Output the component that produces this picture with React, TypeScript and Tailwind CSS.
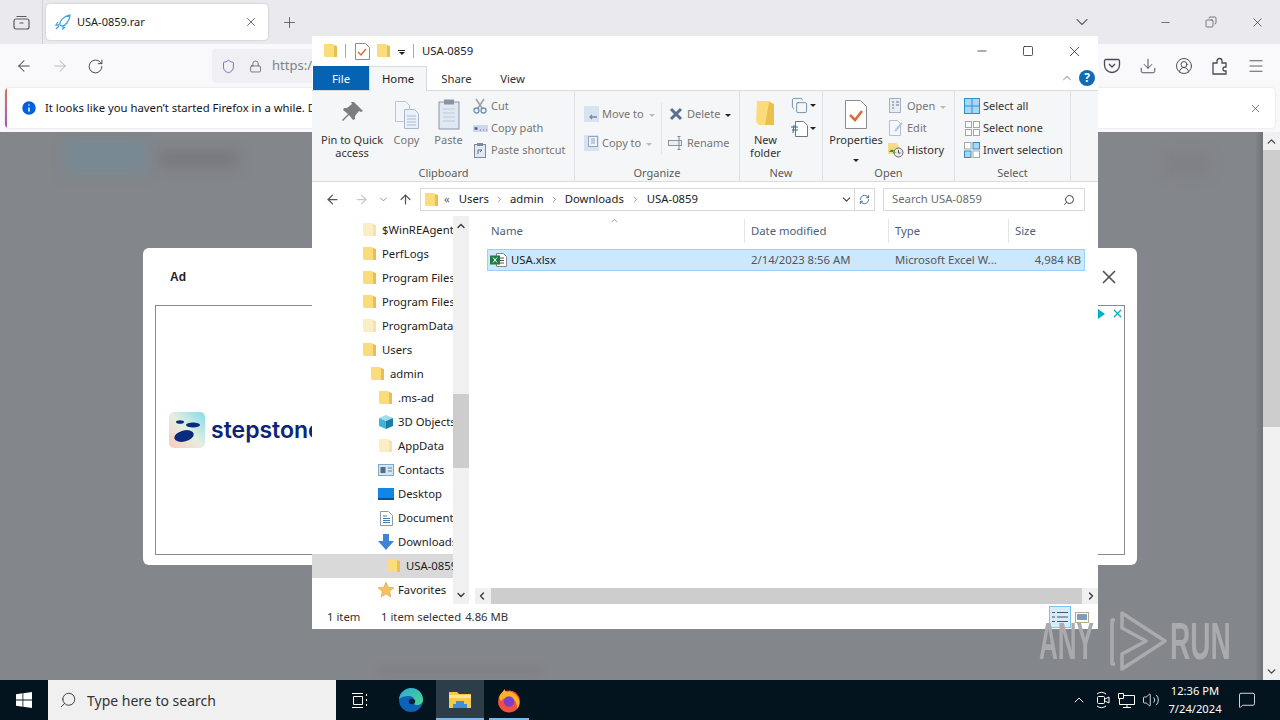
import { ArrowLeft, ArrowRight, ArrowUp, ChevronDown, ChevronLeft, ChevronRight, ChevronUp, Copy, Download, Menu, MessageSquare, Minus, Plus, RotateCw, Search, Square, Lock, Shield, X, CircleUserRound, Info, RefreshCw, Volume2 } from 'lucide-react'

function Folder({ pale = false, size = 14 }: { pale?: boolean; size?: number }) {
  return (
    <svg width={size} height={size + 2} viewBox="0 0 14 16" className="shrink-0">
      <path d="M0 1h9l1 1v12H1l-1-1z" fill={pale ? '#fbeec4' : '#fbdc7c'} />
      <path d="M10 2l3 1v11h-3z" fill={pale ? '#f5e3ac' : '#e9bf52'} />
    </svg>
  )
}

function Arrowhead() {
  return <span className="inline-block h-0 w-0 border-x-[3px] border-t-[3px] border-x-transparent border-t-[#222]" />
}

function PaleArrowhead() {
  return <span className="inline-block h-0 w-0 border-x-[3px] border-t-[3px] border-x-transparent border-t-[#bbb]" />
}

function RibbonSmall({ icon, label, muted = true, suffix }: { icon: React.ReactNode; label: string; muted?: boolean; suffix?: React.ReactNode }) {
  return (
    <div className={`flex h-[22px] items-center gap-[3px] whitespace-nowrap ${muted ? 'text-[#757575]' : 'text-[#333]'}`}>
      <span className="flex w-[16px] justify-center">{icon}</span>
      <span>{label}</span>
      {suffix}
    </div>
  )
}

function RibbonGroup({ label, width, children }: { label: string; width: string; children: React.ReactNode }) {
  return (
    <div className={`flex h-full shrink-0 flex-col border-r border-[#dfe1e4] ${width}`}>
      <div className="min-h-0 flex-1">{children}</div>
      <div className="h-[17px] text-center leading-[17px] text-[#5c5c5c]">{label}</div>
    </div>
  )
}

const treeRows: { label: string; indent: string; icon?: React.ReactNode; pale?: boolean; selected?: boolean }[] = [
  { label: '$WinREAgent', indent: 'pl-[50px]', pale: true },
  { label: 'PerfLogs', indent: 'pl-[50px]' },
  { label: 'Program Files', indent: 'pl-[50px]' },
  { label: 'Program Files', indent: 'pl-[50px]' },
  { label: 'ProgramData', indent: 'pl-[50px]', pale: true },
  { label: 'Users', indent: 'pl-[50px]' },
  { label: 'admin', indent: 'pl-[58px]' },
  { label: '.ms-ad', indent: 'pl-[66px]' },
  {
    label: '3D Objects',
    indent: 'pl-[66px]',
    icon: (
      <svg width="16" height="16" viewBox="0 0 16 16">
        <path d="M8 1l7 3-7 3-7-3z" fill="#9fdcec" />
        <path d="M1 4l7 3v8l-7-3z" fill="#3fb4d4" />
        <path d="M15 4l-7 3v8l7-3z" fill="#1a7fa6" />
      </svg>
    ),
  },
  { label: 'AppData', indent: 'pl-[66px]', pale: true },
  {
    label: 'Contacts',
    indent: 'pl-[66px]',
    icon: (
      <svg width="16" height="12" viewBox="0 0 16 12">
        <rect x="0.5" y="0.5" width="15" height="11" fill="#cfe6f5" stroke="#7fa9c6" />
        <rect x="2.5" y="3" width="5" height="6" fill="#5a6a78" />
        <path d="M10 4h4M10 7h4" stroke="#5b86a6" />
      </svg>
    ),
  },
  {
    label: 'Desktop',
    indent: 'pl-[66px]',
    icon: (
      <svg width="16" height="12" viewBox="0 0 16 12">
        <rect width="16" height="12" fill="#0f86e8" />
        <rect y="10" width="16" height="2" fill="#0a4f98" />
      </svg>
    ),
  },
  {
    label: 'Documents',
    indent: 'pl-[66px]',
    icon: (
      <svg width="13" height="15" viewBox="0 0 13 15">
        <path d="M.5.5h8l4 4v10H.5z" fill="#fff" stroke="#8a9aa8" />
        <path d="M3 5h4M3 7.500h7M3 9.500h7M3 11.500h7" stroke="#3f7fb0" />
      </svg>
    ),
  },
  {
    label: 'Downloads',
    indent: 'pl-[66px]',
    icon: (
      <svg width="16" height="16" viewBox="0 0 16 16">
        <path d="M5 0h6v7h5l-8 9-8-9h5z" fill="#3f84d4" />
      </svg>
    ),
  },
  { label: 'USA-0859', indent: 'pl-[74px]', selected: true, pale: false },
  {
    label: 'Favorites',
    indent: 'pl-[66px]',
    icon: (
      <svg width="16" height="16" viewBox="0 0 16 16">
        <path d="M8 0l2.300 5.200 5.700.6-4.300 3.700 1.300 5.500L8 12.100 3 15l1.300-5.500L0 5.800l5.700-.6z" fill="#f4c063" stroke="#d79a3a" strokeWidth="0.5" />
      </svg>
    ),
  },
]

function ExplorerWindow() {
  return (
    <div className="absolute left-[312px] top-[36px] flex h-[593px] w-[786px] flex-col bg-white text-[11.300px] text-[#1c1c1c] [font-family:'Noto_Sans',sans-serif]">
      {/* title bar */}
      <div className="flex h-[30px] shrink-0 items-center pl-[12px]">
        <Folder />
        <span className="ml-[7px] h-[14px] w-px bg-[#aaa]" />
        <svg width="15" height="17" viewBox="0 0 15 17" className="ml-[9px]">
          <path d="M.5.5h10l4 4v12H.5z" fill="#fff" stroke="#8d8d8d" />
          <path d="M3 9l3 3 5-6" fill="none" stroke="#dc6a3c" strokeWidth="1.500" />
        </svg>
        <span className="ml-[7px]"><Folder /></span>
        <span className="ml-[7px] mt-[3px] flex flex-col items-center gap-px">
          <span className="h-px w-[7px] bg-[#222]" />
          <Arrowhead />
        </span>
        <span className="ml-[8px] h-[14px] w-px bg-[#aaa]" />
        <span className="ml-[8px] mt-px">USA-0859</span>
        <div className="ml-auto flex items-center text-[#111]">
          <span className="flex w-[46px] justify-center"><Minus size={14} strokeWidth={1.2} /></span>
          <span className="flex w-[46px] justify-center"><Square size={12} strokeWidth={1.4} /></span>
          <span className="flex w-[46px] justify-center"><X size={17} strokeWidth={1} /></span>
          <span className="w-[1px]" />
        </div>
      </div>

      {/* ribbon tabs */}
      <div className="relative flex h-[25px] shrink-0 items-end border-b border-[#dadbdc]">
        <div className="ml-px flex h-[24px] w-[56px] items-center justify-center bg-[#0563b1] pt-[2px] text-white">File</div>
        <div className="relative top-px flex h-[25px] w-[58px] items-center justify-center border-x border-t border-[#dadbdc] bg-[#f5f6f7] pt-[1px] text-[#222]">Home</div>
        <div className="flex h-[24px] w-[59px] items-center justify-center pt-[2px] text-[#333]">Share</div>
        <div className="flex h-[24px] w-[53px] items-center justify-center pt-[2px] text-[#333]">View</div>
        <div className="ml-auto mb-[4px] mr-[3px] flex items-center gap-[5px]">
          <ChevronUp size={14} className="text-[#bbb]" />
          <span className="flex h-[16px] w-[16px] items-center justify-center rounded-full bg-[#0f6cbd] text-[12px] font-bold leading-none text-white">?</span>
        </div>
      </div>

      {/* ribbon */}
      <div className="flex h-[91px] shrink-0 border-b border-[#dadbdc] bg-[#f5f6f7] pl-px text-[11px]">
        <RibbonGroup label="Clipboard" width="w-[262px]">
          <div className="flex h-full">
            <div className="flex w-[78px] flex-col items-center pt-[9px] leading-[13px] text-[#333]">
              <svg width="26" height="26" viewBox="0 0 26 26" className="mb-[7px]">
                <path d="M15 2l9 9-2 1-2-1-4 5 0 3-2 1-4-5-6 6-1-1 6-6-5-4 1-2 3 0 5-4-1-2z" fill="#7b7f84" />
              </svg>
              <span>Pin to Quick</span>
              <span>access</span>
            </div>
            <div className="flex w-[31px] flex-col items-center pt-[9px] text-[#757575]">
              <svg width="26" height="30" viewBox="0 0 26 30" className="mb-[3px]">
                <path d="M1.500 1.500h10l4 4v16h-14z" fill="#f2f5fa" stroke="#b9c4d4" />
                <path d="M10.500 9.500h10l4 4v15h-14z" fill="#eaf0f8" stroke="#a9b8cc" />
                <path d="M13 16h9M13 19h9M13 22h9M13 25h9" stroke="#a8bcd6" />
              </svg>
              <span className="leading-[14px]">Copy</span>
            </div>
            <div className="ml-[10px] flex w-[33px] flex-col items-center pt-[8px] text-[#757575]">
              <svg width="22" height="31" viewBox="0 0 22 31" className="mb-[3px]">
                <rect x="1" y="3" width="20" height="27" fill="#dfe8f3" stroke="#8a95a3" />
                <rect x="6" y="0.500" width="10" height="5" fill="#8a95a3" />
                <path d="M5 10h12M5 14h12M5 18h12M5 22h12" stroke="#bccbdd" />
              </svg>
              <span className="leading-[14px]">Paste</span>
            </div>
            <div className="ml-[7px] flex flex-col pt-[4px]">
              <RibbonSmall label="Cut" icon={
                <svg width="14" height="16" viewBox="0 0 14 16">
                  <path d="M3 1l6 9M11 1l-6 9" stroke="#9aa0a8" strokeWidth="1.500" />
                  <circle cx="3.500" cy="12.500" r="2.500" fill="none" stroke="#6f90b8" strokeWidth="1.300" />
                  <circle cx="10.500" cy="12.500" r="2.500" fill="none" stroke="#6f90b8" strokeWidth="1.300" />
                </svg>
              } />
              <RibbonSmall label="Copy path" icon={
                <svg width="15" height="7" viewBox="0 0 15 7">
                  <rect width="15" height="7" fill="#cfd6ee" />
                  <path d="M2 5V2l2 3V2M7 5h1M10 5h1M13 5h1" stroke="#6a76a0" />
                </svg>
              } />
              <RibbonSmall label="Paste shortcut" icon={
                <svg width="12" height="15" viewBox="0 0 12 15">
                  <rect x="0.500" y="1.500" width="11" height="13" fill="#dfe8f3" stroke="#7f8a98" />
                  <rect x="3" y="0" width="6" height="3" fill="#7f8a98" />
                  <path d="M4 11V7h4M6 9l2-2" fill="none" stroke="#5f6c7c" />
                </svg>
              } />
            </div>
          </div>
        </RibbonGroup>
        <RibbonGroup label="Organize" width="w-[165px]">
          <div className="flex pl-[8px] pt-[12px]">
            <div className="flex w-[78px] flex-col gap-[7px]">
              <RibbonSmall label="Move to" suffix={<span className="ml-[2px] mb-[2px]"><PaleArrowhead /></span>} icon={
                <svg width="15" height="16" viewBox="0 0 15 16">
                  <rect width="15" height="16" fill="#d9e2f0" />
                  <path d="M13 11H6M8 9l-2 2 2 2" stroke="#7488a8" fill="none" strokeWidth="1.300" />
                </svg>
              } />
              <RibbonSmall label="Copy to" suffix={<span className="ml-[2px] mb-[2px]"><PaleArrowhead /></span>} icon={
                <svg width="15" height="16" viewBox="0 0 15 16">
                  <rect width="15" height="16" fill="#d9e2f0" />
                  <rect x="4.500" y="1.500" width="9" height="10" fill="#eef2f8" stroke="#8fa6c4" />
                  <path d="M7 4h4M7 6h4M7 8h4" stroke="#8fa6c4" />
                </svg>
              } />
            </div>
            <div className="flex flex-col gap-[7px] border-l border-[#e3e5e8] pl-[6px]">
              <RibbonSmall label="Delete" suffix={<span className="ml-[2px] mb-[2px]"><Arrowhead /></span>} icon={
                <svg width="14" height="14" viewBox="0 0 14 14">
                  <path d="M2 2l10 10M12 2L2 12" stroke="#56708e" strokeWidth="3" />
                </svg>
              } />
              <RibbonSmall label="Rename" icon={
                <svg width="16" height="14" viewBox="0 0 16 14">
                  <rect x="0.500" y="4.500" width="13" height="5" fill="#e8edf4" stroke="#8896a8" />
                  <path d="M11 1v12M9.500.5h3M9.500 13.500h3" stroke="#7b8796" fill="none" />
                </svg>
              } />
            </div>
          </div>
        </RibbonGroup>
        <RibbonGroup label="New" width="w-[83px]">
          <div className="flex">
            <div className="flex w-[51px] flex-col items-center pt-[9px] leading-[13px] text-[#333]">
              <svg width="22" height="27" viewBox="0 0 22 27" className="mb-[6px]">
                <path d="M2 1h13l2 2v22l-13 0-3-3z" fill="#fbdc7c" />
                <path d="M14 2l5 2v21h-9z" fill="#ecbf4f" />
              </svg>
              <span>New</span>
              <span>folder</span>
            </div>
            <div className="flex flex-col gap-[6px] pt-[6px]">
              <div className="flex items-center gap-[2px]">
                <Copy size={17} strokeWidth={1} className="text-[#3f6f93]" />
                <Arrowhead />
              </div>
              <div className="flex items-center gap-[2px]">
                <svg width="17" height="17" viewBox="0 0 17 17">
                  <path d="M4.500 1.500h8l4 4v11h-12z" fill="#fff" stroke="#6d7782" />
                  <path d="M0 7h7M1 10h6M3 5l-1 8" stroke="#2f6f9f" />
                </svg>
                <Arrowhead />
              </div>
            </div>
          </div>
        </RibbonGroup>
        <RibbonGroup label="Open" width="w-[132px]">
          <div className="flex">
            <div className="flex w-[65px] flex-col items-center pl-px pt-[9px] text-[#333]">
              <svg width="22" height="29" viewBox="0 0 22 29" className="mb-[4px]">
                <path d="M.5.5h15l6 6v22H.500z" fill="#fff" stroke="#8d8d8d" />
                <path d="M5 15l5 5 7-9" fill="none" stroke="#dd6b37" strokeWidth="2.500" />
              </svg>
              <span className="leading-[14px]">Properties</span>
              <span className="mt-[3px]"><Arrowhead /></span>
            </div>
            <div className="flex flex-col pt-[4px]">
              <RibbonSmall label="Open" suffix={<span className="ml-[2px] mb-[2px]"><PaleArrowhead /></span>} icon={
                <svg width="14" height="16" viewBox="0 0 14 16">
                  <rect x="0.500" y="0.500" width="11" height="14" fill="#e8edf5" stroke="#a5b1c2" />
                  <path d="M3 4h2M3 7h2M3 10h2M7 4h3M7 7h3" stroke="#64768c" />
                </svg>
              } />
              <RibbonSmall label="Edit" icon={
                <svg width="15" height="16" viewBox="0 0 15 16">
                  <path d="M.5.5h8l3 3v12H.5z" fill="#f3f6fa" stroke="#b4bfce" />
                  <path d="M6 11l7-8" stroke="#b7c6dc" strokeWidth="2" />
                </svg>
              } />
              <RibbonSmall label="History" muted={false} icon={
                <svg width="16" height="16" viewBox="0 0 16 16">
                  <path d="M0 1h8l3 3v8H0z" fill="#f3dc82" />
                  <circle cx="10.500" cy="10.500" r="4.500" fill="#e8e8e8" stroke="#666" />
                  <path d="M10.500 8v3h2" fill="none" stroke="#555" />
                  <path d="M1 10a4 4 0 0 1 5-2l-1 3 4-1" fill="#2f9a3a" />
                </svg>
              } />
            </div>
          </div>
        </RibbonGroup>
        <RibbonGroup label="Select" width="w-[116px]">
          <div className="flex flex-col pl-[9px] pt-[4px]">
            <RibbonSmall muted={false} label="Select all" icon={
              <svg width="16" height="16" viewBox="0 0 16 16">
                <rect x="0.500" y="0.500" width="15" height="15" fill="#a5d8f7" stroke="#2f8fd0" />
                <path d="M8 0v16M0 8h16" stroke="#2f8fd0" />
              </svg>
            } />
            <RibbonSmall muted={false} label="Select none" icon={
              <svg width="15" height="15" viewBox="0 0 15 15" fill="#fff" stroke="#a5a5a5">
                <rect x="0.500" y="0.500" width="6" height="6" />
                <rect x="8.500" y="0.500" width="6" height="6" />
                <rect x="0.500" y="8.500" width="6" height="6" />
                <rect x="8.500" y="8.500" width="6" height="6" />
              </svg>
            } />
            <RibbonSmall muted={false} label="Invert selection" icon={
              <svg width="16" height="16" viewBox="0 0 16 16">
                <rect x="0.500" y="0.500" width="6.500" height="6.500" fill="#fff" stroke="#a5a5a5" />
                <rect x="9" y="0.500" width="6.500" height="6.500" fill="#a5d8f7" stroke="#2f8fd0" />
                <rect x="0.500" y="9" width="6.500" height="6.500" fill="#a5d8f7" stroke="#2f8fd0" />
                <rect x="9" y="9" width="6.500" height="6.500" fill="#fff" stroke="#a5a5a5" />
              </svg>
            } />
          </div>
        </RibbonGroup>
      </div>

      {/* address row */}
      <div className="flex h-[34px] shrink-0 items-center pl-[13px] pt-px">
        <ArrowLeft size={15} strokeWidth={2} className="text-[#555]" />
        <ArrowRight size={15} strokeWidth={2} className="ml-[14px] text-[#c9c9c9]" />
        <ChevronDown size={11} strokeWidth={2} className="ml-[9px] text-[#888]" />
        <ArrowUp size={15} strokeWidth={2} className="ml-[9px] text-[#555]" />
        <div className="ml-[7px] flex h-[23px] w-[435px] items-center border border-[#d9d9d9] pl-[4px]">
          <Folder />
          <span className="ml-[5px] text-[#666]">«</span>
          <span className="ml-[9px]">Users</span>
          <ChevronRight size={9} className="mx-[6px] text-[#777]" />
          <span>admin</span>
          <ChevronRight size={9} className="mx-[6px] text-[#777]" />
          <span>Downloads</span>
          <ChevronRight size={9} className="mx-[7px] text-[#777]" />
          <span>USA-0859</span>
          <ChevronDown size={13} className="ml-auto mr-[1px] text-[#444]" />
        </div>
        <div className="flex h-[23px] w-[20px] items-center justify-center border-y border-r border-[#d9d9d9]">
          <RefreshCw size={11} className="text-[#4a6a8a]" />
        </div>
        <div className="ml-[8px] flex h-[23px] w-[202px] items-center justify-between border border-[#d9d9d9] pl-[8px] pr-[9px] text-[#6d6d6d]">
          <span>Search USA-0859</span>
          <Search size={12} className="-scale-x-100 text-[#444]" />
        </div>
      </div>

      {/* tree + list */}
      <div className="flex min-h-0 flex-1">
        <div className="flex w-[157px] shrink-0">
          <div className="w-[141px] overflow-hidden pt-[2px]">
            {treeRows.map((row, i) => (
              <div key={i} className={`flex h-[24px] items-center whitespace-nowrap ${row.indent} ${row.selected ? 'bg-[#d9d9d9]' : ''}`}>
                <span className="flex w-[16px] shrink-0 justify-center">{row.icon ?? <Folder pale={row.pale} />}</span>
                <span className="ml-[4px]">{row.label}</span>
              </div>
            ))}
          </div>
          <div className="flex w-[16px] flex-col items-center bg-[#f0f0f0] text-[#333]">
            <ChevronUp size={12} strokeWidth={2.5} className="mt-[4px]" />
            <div className="mt-[162px] h-[74px] w-full bg-[#cdcdcd]" />
            <ChevronDown size={12} strokeWidth={2.5} className="mt-auto mb-[3px]" />
          </div>
        </div>
        <div className="relative flex min-w-0 flex-1 flex-col">
          <span className="absolute left-[141px] top-0"><ChevronUp size={9} className="text-[#777]" /></span>
          <div className="flex h-[30px] shrink-0 items-center text-[#4c607a]">
            <span className="ml-[22px] w-[254px] border-r border-[#e5e5e5] leading-[24px]">Name</span>
            <span className="w-[144px] border-r border-[#e5e5e5] pl-[6px] leading-[24px]">Date modified</span>
            <span className="w-[120px] border-r border-[#e5e5e5] pl-[6px] leading-[24px]">Type</span>
            <span className="pl-[6px]">Size</span>
          </div>
          <div className="ml-[18px] mr-[13px] mt-[3px] flex h-[22px] items-center border border-[#99d1ff] bg-[#cce8ff] pl-[2px]">
            <svg width="17" height="16" viewBox="0 0 17 16" className="shrink-0">
              <path d="M6.500 1.500h7l3 3v10h-10z" fill="#fff" stroke="#888" />
              <path d="M10 6h4M10 8.500h4M10 11h4" stroke="#555" />
              <rect x="0" y="3.500" width="10" height="9" fill="#1e7a46" />
              <path d="M3 5.500l4 5M7 5.500l-4 5" stroke="#fff" />
            </svg>
            <span className="ml-[4px] w-[240px]">USA.xlsx</span>
            <span className="w-[144px] text-[#555]">2/14/2023 8:56 AM</span>
            <span className="w-[106px] whitespace-nowrap text-[#555]">Microsoft Excel W...</span>
            <span className="ml-auto mr-[3px] text-[#555]">4,984 KB</span>
          </div>
          <div className="ml-[6px] mt-auto flex h-[16px] items-center bg-[#f0f0f0] text-[#333]">
            <ChevronLeft size={12} strokeWidth={2.5} className="ml-[1px] shrink-0" />
            <div className="mx-[3px] h-full flex-1 bg-[#cdcdcd]" />
            <ChevronRight size={12} strokeWidth={2.5} className="mr-[1px] shrink-0" />
          </div>
        </div>
      </div>

      {/* status bar */}
      <div className="flex h-[25px] shrink-0 items-center pl-[15px] pt-px text-[#333]">
        <span className="w-[54px]">1 item</span>
        <span>1 item selected</span>
        <span className="ml-[4px]">4.86 MB</span>
        <div className="ml-auto mr-[9px] flex items-center gap-[4px]">
          <span className="flex h-[22px] w-[22px] items-center justify-center border border-[#7ec3ee] bg-[#d4ecfb]">
            <svg width="16" height="12" viewBox="0 0 16 12" stroke="#555" fill="none">
              <path d="M0 1.500h3M5 1.500h11M0 6h3M5 6h11M0 10.500h3M5 10.500h11" />
            </svg>
          </span>
          <svg width="14" height="11" viewBox="0 0 14 11">
            <rect x="0.500" y="0.500" width="13" height="10" fill="#fff" stroke="#b5a98c" />
            <rect x="2" y="2" width="10" height="6" fill="#7f9db5" />
          </svg>
        </div>
      </div>
    </div>
  )
}

function AdDialog() {
  return (
    <div className="absolute left-[143px] top-[248px] flex h-[317px] w-[994px] flex-col rounded-[6px] bg-white px-[12px] [font-family:'Liberation_Sans',sans-serif]">
      <div className="flex h-[57px] shrink-0 items-center justify-between">
        <span className="ml-[15px] text-[12px] font-bold text-[#222]">Ad</span>
        <X size={22} strokeWidth={1.9} className="mr-[5px] text-[#555]" />
      </div>
      <div className="relative flex h-[250px] items-center border border-[#8a8a8a] pl-[13px]">
        <svg width="36" height="36" viewBox="0 0 36 36" className="shrink-0">
          <defs>
            <linearGradient id="stepstoneBg" x1="1" y1="0" x2="0" y2="1">
              <stop offset="0" stopColor="#7fdde6" />
              <stop offset="0.500" stopColor="#e6efe2" />
              <stop offset="1" stopColor="#fbc9bd" />
            </linearGradient>
          </defs>
          <rect width="36" height="36" rx="5" fill="url(#stepstoneBg)" />
          <ellipse cx="11" cy="10" rx="4" ry="1.800" fill="#0a2a7d" />
          <ellipse cx="24" cy="13" rx="7" ry="2.500" fill="#0a2a7d" />
          <ellipse cx="15" cy="24" rx="10" ry="5.500" fill="#0a2a7d" transform="rotate(-15 15 24)" />
        </svg>
        <span className="ml-[6px] text-[23px] font-semibold leading-none text-[#0c2577] [font-family:'Inter',sans-serif]">stepstone</span>
        <div className="absolute right-0 top-0 flex items-center gap-[6px] pt-[1px] text-[#00aecd]">
          <span className="h-0 w-0 border-y-[5px] border-l-[7px] border-y-transparent border-l-[#00aecd]" />
          <X size={13} strokeWidth={2.2} />
        </div>
      </div>
    </div>
  )
}

function FirefoxChrome() {
  return (
    <div className="shrink-0 [font-family:'Noto_Sans',sans-serif]">
      {/* tabs */}
      <div className="flex h-[44px] items-center bg-[#e9e9ee] text-[#1c1b22]">
        <div className="flex h-full w-[43px] items-center justify-center border-r border-[#d0d0d6]">
          <svg width="17" height="15" viewBox="0 0 17 15" fill="none" stroke="#5b5b66" strokeWidth="1.200">
            <rect x="1" y="4" width="15" height="10" rx="2" />
            <path d="M3.500 1.500h10M6.500 8h4" />
          </svg>
        </div>
        <div className="ml-[3px] flex h-[36px] w-[222px] items-center rounded-[4px] bg-white px-[8px] shadow-[0_0_2px_rgba(0,0,0,0.25)]">
          <svg width="18" height="18" viewBox="0 0 18 18" fill="none" stroke="#4aa3e0" strokeWidth="1.300">
            <path d="M6 12C5 8 10 3 16 2c0 6-5 11-8 11z" />
            <path d="M4 9l-2 3 3 0M9 13l0 3 2-2M2 16l3-3" />
          </svg>
          <span className="ml-[5px] text-[11px]">USA-0859.rar</span>
          <X size={14} strokeWidth={1.3} className="ml-auto mr-[2px] text-[#444]" />
        </div>
        <Plus size={17} strokeWidth={1.2} className="ml-[13px] text-[#555]" />
        <ChevronDown size={20} strokeWidth={1.3} className="ml-auto mr-[50px] text-[#666]" />
        <div className="flex items-center text-[#222]">
          <span className="flex w-[46px] justify-center"><Minus size={13} strokeWidth={1.1} /></span>
          <span className="flex w-[46px] justify-center"><Copy size={12} strokeWidth={1.1} className="-scale-x-100" /></span>
          <span className="flex w-[46px] justify-center"><X size={15} strokeWidth={1} /></span>
        </div>
      </div>
      {/* toolbar */}
      <div className="flex h-[44px] items-center bg-[#f9f9fb] text-[#4a4a55]">
        <ArrowLeft size={18} strokeWidth={1.4} className="ml-[15px]" />
        <ArrowRight size={18} strokeWidth={1.4} className="ml-[18px] text-[#bbbbc0]" />
        <RotateCw size={17} strokeWidth={1.4} className="ml-[18px]" />
        <div className="ml-[108px] flex h-[34px] w-[100px] items-center rounded-l-[4px] bg-[#f0f0f4] pl-[9px]">
          <Shield size={17} strokeWidth={1.3} className="text-[#5a5ab0]" />
          <Lock size={15} strokeWidth={1.3} className="ml-[13px]" />
          <span className="ml-[10px] text-[13px] text-[#808086]">https:/</span>
        </div>
        <div className="ml-auto mr-[15px] flex items-center gap-[18px]">
          <svg width="18" height="16" viewBox="0 0 18 16" fill="none" stroke="#4a4a55" strokeWidth="1.300">
            <path d="M2.500 1.500h13a1.500 1.500 0 0 1 1 1.500v4a7.500 7.500 0 0 1-15 0V3a1.500 1.500 0 0 1 1-1.500zM6 6l3 3 3-3" />
          </svg>
          <Download size={18} strokeWidth={1.3} />
          <CircleUserRound size={18} strokeWidth={1.3} />
          <svg width="18" height="18" viewBox="0 0 18 18" fill="none" stroke="#4a4a55" strokeWidth="1.300">
            <path d="M2 6h4V4a2.500 2.500 0 0 1 5 0v2h4v4h-1a2 2 0 0 0 0 4h1v3H2z" />
          </svg>
          <Menu size={18} strokeWidth={1.2} />
        </div>
      </div>
      {/* notification */}
      <div className="h-[44px] bg-[#f9f9fb] px-[5px]">
        <div className="relative flex h-[40px] items-center overflow-hidden rounded-[4px] bg-white pl-[15px] text-[11.300px] text-[#15141a] shadow-[0_0_2px_rgba(0,0,0,0.15)]">
          <span className="absolute inset-y-0 left-0 w-[2px] bg-gradient-to-b from-[#e0703c] to-[#a050c8]" />
          <Info size={18} fill="#0060df" stroke="#fff" strokeWidth={2} />
          <span className="ml-[7px]">It looks like you haven’t started Firefox in a while. Do you want to clean it up</span>
          <X size={13} strokeWidth={1.3} className="ml-auto mr-[13px] text-[#444]" />
        </div>
      </div>
    </div>
  )
}

function Taskbar() {
  return (
    <div className="flex h-[40px] shrink-0 items-center bg-[#03141f] text-white [font-family:'Noto_Sans',sans-serif]">
      <div className="flex w-[48px] justify-center">
        <svg width="16" height="16" viewBox="0 0 16 16" fill="#fff">
          <path d="M0 2.200l6.500-.9v6.300H0zM7.300 1.200L16 0v7.600H7.300zM0 8.400h6.500v6.300L0 13.800zM7.300 8.400H16V16l-8.700-1.200z" />
        </svg>
      </div>
      <div className="flex h-full w-[288px] items-center bg-[#f0f0f0] pl-[11px] text-[#333]">
        <Search size={18} strokeWidth={1.2} className="-scale-x-100" />
        <span className="ml-[10px] text-[14px]">Type here to search</span>
      </div>
      <div className="flex w-[48px] justify-center">
        <svg width="16" height="15" viewBox="0 0 16 15" fill="none" stroke="#fff">
          <path d="M0 .5h11M0 14.500h11M1.500 3.500h9v8h-9zM14.500 1v2M14.500 6v2M14.500 11v2" />
        </svg>
      </div>
      <div className="flex w-[52px] justify-center pl-[2px]">
        <svg width="24" height="24" viewBox="0 0 24 24">
          <defs>
            <linearGradient id="edgeA" x1="0" y1="0" x2="1" y2="1">
              <stop offset="0" stopColor="#2fa8d8" />
              <stop offset="1" stopColor="#4bd88a" />
            </linearGradient>
          </defs>
          <circle cx="12" cy="12" r="12" fill="#0c62b4" />
          <path d="M0 11C1 4 7 0 12 0c7 0 12 5 12 12 0 3-3 5-6 5-2 0-4-1-3-3 1-3-1-6-5-6-4 0-8 1-10 3z" fill="url(#edgeA)" />
          <ellipse cx="13" cy="13.500" rx="3.200" ry="2.800" fill="#04213a" />
        </svg>
      </div>
      <div className="relative flex h-full w-[48px] items-center justify-center bg-[#2d3e4a]">
        <svg width="22" height="20" viewBox="0 0 22 20">
          <path d="M0 2h8l2 2h12v14H0z" fill="#f7c948" />
          <path d="M0 5h22v3H0z" fill="#fde39a" />
          <path d="M7 11h8v3h3v4H4v-4h3z" fill="#3f8fd8" />
        </svg>
        <span className="absolute inset-x-0 bottom-0 h-[2px] bg-[#7db8e8]" />
      </div>
      <div className="relative flex h-full w-[50px] items-center justify-center">
        <svg width="24" height="25" viewBox="0 0 23 24">
          <circle cx="11.500" cy="13" r="10.500" fill="#f0503c" />
          <path d="M2 9c1-4 4-5 5-8 1 3 3 3 5 2 3 1 7 3 9 8 1 4 0 8-2 9 1-6-3-11-8-11C8 9 5 10 4 13z" fill="#fdb02a" />
          <circle cx="11.500" cy="13" r="5" fill="#7a3fc8" />
        </svg>
        <span className="absolute inset-x-[5px] bottom-0 h-[2px] bg-[#7db8e8]" />
      </div>
      <div className="ml-auto flex items-center">
        <ChevronUp size={16} strokeWidth={1.4} />
        <svg width="14" height="18" viewBox="0 0 14 18" fill="none" stroke="#fff" className="ml-[9px]">
          <path d="M1 3a7 7 0 0 1 9 0M1 15a7 7 0 0 0 9 0" />
          <rect x="1.500" y="5.500" width="7" height="7" rx="1" />
          <path d="M9 8l4-2v6l-4-2" />
        </svg>
        <svg width="17" height="15" viewBox="0 0 17 15" fill="none" stroke="#fff" className="ml-[8px]">
          <path d="M.5.500h5v5h-5zM5.500 2.500h11v9H1.500v-6M9 11.500v3M5 14.500h8" />
        </svg>
        <Volume2 size={18} strokeWidth={1.1} className="ml-[7px]" />
        <div className="ml-[4px] flex w-[62px] flex-col items-center text-[11.200px] leading-[18px]">
          <span>12:36 PM</span>
          <span>7/24/2024</span>
        </div>
        <MessageSquare size={18} strokeWidth={1.1} className="ml-[12px] mr-[24px]" />
      </div>
    </div>
  )
}

export default function App() {
  return (
    <div className="relative flex h-[720px] w-[1280px] flex-col overflow-hidden bg-[#83868b]">
      <FirefoxChrome />
      <div className="relative flex min-h-0 flex-1 overflow-hidden">
        <div className="relative flex-1 bg-[#83868b]">
          {/* blurred page content behind the modal backdrop */}
          <span className="absolute left-[64px] top-[8px] h-[34px] w-[84px] bg-[#788892] blur-[6px]" />
          <span className="absolute left-[160px] top-[18px] h-[18px] w-[78px] bg-[#777a7f] blur-[6px]" />
          <span className="absolute left-[1165px] top-[20px] h-[24px] w-[44px] bg-[#7e8186] blur-[6px]" />
          <span className="absolute left-[380px] top-[537px] h-[5px] w-[160px] bg-[#7a7d82] blur-[4px]" />
          <span className="absolute inset-y-0 right-0 w-[8px] bg-gradient-to-r from-[#83868b] to-[#6f7276]" />
        </div>
        <div className="flex w-[17px] flex-col items-center bg-[#f0f0f0] text-[#444]">
          <ChevronUp size={13} strokeWidth={2.5} className="mt-[3px]" />
          <div className="mt-[2px] h-[277px] w-full bg-[#cdcdcd]" />
          <ChevronDown size={13} strokeWidth={2.5} className="mt-auto mb-[2px]" />
        </div>
      </div>
      <Taskbar />
      <AdDialog />
      <ExplorerWindow />
      {/* watermark */}
      <div className="pointer-events-none absolute left-[1039px] top-[610px] flex items-start text-[#a9abae] [font-family:'Liberation_Sans',sans-serif]">
        <span className="mt-[5px] w-[69px] origin-left scale-x-[0.5] text-[52px] font-bold leading-none">ANY</span>
        <svg width="60" height="64" viewBox="0 0 60 64" fill="none" stroke="currentColor" strokeWidth="3.500" strokeLinejoin="round">
          <path d="M7 10H4v44h3M14 3l43 28-43 28V44l24-13-24-13zM14 3v15" />
        </svg>
        <span className="mt-[5px] ml-[2px] w-[60px] origin-left scale-x-[0.54] text-[52px] font-bold leading-none">RUN</span>
      </div>
    </div>
  )
}
